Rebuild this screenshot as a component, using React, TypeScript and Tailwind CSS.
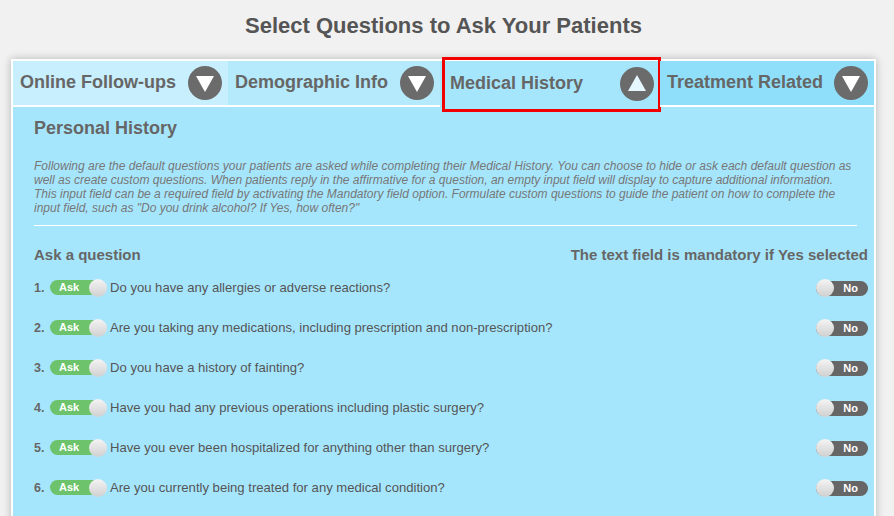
import React from 'react';

const tabs = [
  { label: 'Online Follow-ups', bg: 'bg-[#c8effd]', active: false },
  { label: 'Demographic Info', bg: 'bg-[#b5eafc]', active: false },
  { label: 'Medical History', bg: 'bg-[#a6e6fd]', active: true },
  { label: 'Treatment Related', bg: 'bg-[#8fdffb]', active: false },
];

const questions = [
  'Do you have any allergies or adverse reactions?',
  'Are you taking any medications, including prescription and non-prescription?',
  'Do you have a history of fainting?',
  'Have you had any previous operations including plastic surgery?',
  'Have you ever been hospitalized for anything other than surgery?',
  'Are you currently being treated for any medical condition?',
];

function Arrow({ up }: { up: boolean }) {
  return (
    <svg width="34" height="34" viewBox="0 0 34 34" className="shrink-0">
      <circle cx="17" cy="17" r="17" fill="#6b6b6b" />
      {up ? (
        <polygon points="17,8 26,24 8,24" fill="#e6f7fe" />
      ) : (
        <polygon points="8,10 26,10 17,26" fill="#ffffff" />
      )}
    </svg>
  );
}

function AskToggle() {
  return (
    <div className="relative flex h-[15px] w-[56px] items-center rounded-full bg-[#6cc36c]">
      <span className="pl-[9px] text-[11px] font-bold leading-none text-white">Ask</span>
      <span className="absolute right-[-1px] top-1/2 h-[18px] w-[18px] -translate-y-1/2 rounded-full bg-gradient-to-b from-[#f4f4f4] to-[#d0d0d0]" />
    </div>
  );
}

function NoToggle() {
  return (
    <div className="relative flex h-[15px] w-[52px] items-center justify-end rounded-full bg-[#666666]">
      <span className="pr-[10px] text-[11px] font-bold leading-none text-white">No</span>
      <span className="absolute left-0 top-1/2 h-[18px] w-[18px] -translate-y-1/2 rounded-full bg-gradient-to-b from-[#f4f4f4] to-[#d0d0d0]" />
    </div>
  );
}

export default function App() {
  return (
    <div className="h-[516px] w-[894px] overflow-hidden bg-[#f1f1f1] font-['Liberation_Sans',Arial,sans-serif]">
      <h1 className="pr-[7px] pt-[13px] text-center text-[22px] font-bold leading-[26px] text-[#555555]">
        Select Questions to Ask Your Patients
      </h1>

      <div className="ml-[11px] mt-[20px] w-[865px] border-2 border-b-0 border-white bg-[#a6e6fd] shadow-[0_0_8px_rgba(0,0,0,0.25)]">
        <div className="grid h-[46px] grid-cols-[215px_212px_220px_214px]">
          {tabs.map((tab) => (
            <div
              key={tab.label}
              className={`relative flex items-center justify-between pb-[1px] pr-[6px] ${tab.active ? 'pl-[10px]' : 'border-b-2 border-white pl-[7px]'} ${tab.bg}`}
            >
              <span className="text-[18px] font-bold text-[#666666]">{tab.label}</span>
              <Arrow up={tab.active} />
              {tab.active && (
                <div className="pointer-events-none absolute bottom-[-5px] left-[2px] right-[-1px] top-[-4px] border-[3px] border-[#f20000]" />
              )}
            </div>
          ))}
        </div>

        <div className="pb-[20px] pl-[21px] pr-[6px]">
          <h2 className="mt-[10px] text-[18px] font-bold leading-[22px] text-[#666666]">Personal History</h2>
          <p className="mt-[20px] w-[825px] text-[12px] italic leading-[14px] text-[#777777]">
            Following are the default questions your patients are asked while completing their Medical History. You can choose to hide or ask each default question as well as create custom questions. When patients reply in the affirmative for a question, an empty input field will display to capture additional information. This input field can be a required field by activating the Mandatory field option. Formulate custom questions to guide the patient on how to complete the input field, such as "Do you drink alcohol? If Yes, how often?"
          </p>
          <div className="mt-[10px] h-px w-[823px] bg-white" />

          <div className="mt-[20px] flex items-center justify-between text-[15px] font-bold leading-[18px] text-[#666666]">
            <span>Ask a question</span>
            <span>The text field is mandatory if Yes selected</span>
          </div>

          <div className="mt-[4px] flex flex-col">
            {questions.map((q, i) => (
              <div key={q} className="flex h-[40px] items-center justify-between">
                <div className="flex items-center">
                  <span className="w-[16px] text-[12.5px] font-bold text-[#666666]">{i + 1}.</span>
                  <AskToggle />
                  <span className="ml-[4px] text-[13.1px] text-[#555555]">{q}</span>
                </div>
                <NoToggle />
              </div>
            ))}
          </div>
        </div>
      </div>
    </div>
  );
}
